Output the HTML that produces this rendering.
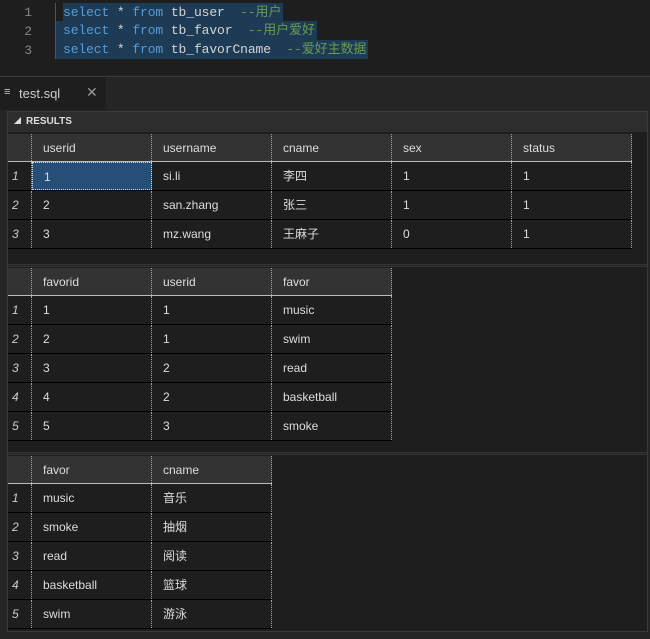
<!DOCTYPE html>
<html><head><meta charset="utf-8"><style>
*{margin:0;padding:0;box-sizing:border-box}
body{width:650px;height:639px;background:#252526;position:relative;overflow:hidden;font-family:"Liberation Sans","Noto Sans CJK SC",sans-serif;color:#ddd}
.ed{position:absolute;left:0;top:0;width:650px;height:75px;background:#1e1e1e}
.ln{position:absolute;left:18px;width:14px;text-align:right;font:13px "Liberation Mono",monospace;color:#858585}
.code{position:absolute;left:63px;font:13px "Liberation Mono","Noto Sans CJK SC",monospace;color:#d4d4d4;white-space:pre;background:#1d3b54;padding-right:2px;letter-spacing:-0.1px}
.k{color:#569cd6}.c{color:#6a9955}
.tabbar{position:absolute;left:0;top:76px;width:650px;height:33px;background:#252526;border-top:1px solid #3a3a3a}
.tab{position:absolute;left:0;top:0;width:106px;height:33px;background:#1e1e1e;font-size:13px;color:#ccc}
.res{position:absolute;left:7px;top:111px;width:641px;height:521px;background:#1e1e1e;border:1px solid #3a3a3a}
.rh{position:absolute;left:0;top:0;width:100%;height:20px;background:#2d2d2d;font-size:10px;font-weight:bold;color:#ddd;line-height:20px;padding-left:18px}
.t{position:absolute;left:0;font-size:12px;color:#ddd}
.row{position:relative;height:29px;border-bottom:1px solid #000;display:flex}
.hdr{height:28px;background:#333;border-bottom:1px solid #bbb}
.cell{width:120px;border-right:1px dotted #aaa;line-height:28px;padding-left:11px;white-space:nowrap}
.num{width:24px;border-right:1px dotted #aaa;line-height:28px;padding-left:4px;font-style:italic;color:#ccc}
.sep{position:absolute;left:0;width:100%;height:3px;border-top:1px solid #333;border-bottom:1px solid #333;background:#252526}
</style></head><body>
<div class="ed">
<div class="ln" style="top:5px">1</div><div class="ln" style="top:24px">2</div><div class="ln" style="top:43px">3</div>
<div style="position:absolute;left:55px;top:3px;width:1px;height:56px;background:#555"></div>
<div class="code" style="top:3px;height:18px;line-height:19px"><span class="k">select</span> * <span class="k">from</span> tb_user  <span class="c">--用户</span></div>
<div class="code" style="top:21px;left:56px;padding-left:7px;height:19px;line-height:20px"><span class="k">select</span> * <span class="k">from</span> tb_favor  <span class="c">--用户爱好</span></div>
<div class="code" style="top:40px;left:56px;padding-left:7px;height:19px;line-height:20px"><span class="k">select</span> * <span class="k">from</span> tb_favorCname  <span class="c">--爱好主数据</span></div>
</div>
<div class="tabbar"><div class="tab"><span style="position:absolute;left:4px;top:9px;font-size:11px;color:#ccc">≡</span><span style="position:absolute;left:19px;top:9px">test.sql</span><span style="position:absolute;left:86px;top:7px;color:#999;font-size:14px">✕</span></div></div>
<div class="res">
<div class="rh"><span style="position:absolute;left:6px;font-size:7px">◢</span>RESULTS</div>
<div class="t" style="top:22px;width:624px">
<div class="row hdr"><div class="num"></div><div class="cell">userid</div><div class="cell">username</div><div class="cell">cname</div><div class="cell">sex</div><div class="cell">status</div></div>
<div class="row"><div class="num">1</div><div class="cell" style="background:#264f78;border:1px dotted #ddd">1</div><div class="cell">si.li</div><div class="cell">李四</div><div class="cell">1</div><div class="cell">1</div></div>
<div class="row"><div class="num">2</div><div class="cell">2</div><div class="cell">san.zhang</div><div class="cell">张三</div><div class="cell">1</div><div class="cell">1</div></div>
<div class="row"><div class="num">3</div><div class="cell">3</div><div class="cell">mz.wang</div><div class="cell">王麻子</div><div class="cell">0</div><div class="cell">1</div></div>
</div>
<div class="sep" style="top:152px"></div>
<div class="t" style="top:156px;width:384px">
<div class="row hdr"><div class="num"></div><div class="cell">favorid</div><div class="cell">userid</div><div class="cell">favor</div></div>
<div class="row"><div class="num">1</div><div class="cell">1</div><div class="cell">1</div><div class="cell">music</div></div>
<div class="row"><div class="num">2</div><div class="cell">2</div><div class="cell">1</div><div class="cell">swim</div></div>
<div class="row"><div class="num">3</div><div class="cell">3</div><div class="cell">2</div><div class="cell">read</div></div>
<div class="row"><div class="num">4</div><div class="cell">4</div><div class="cell">2</div><div class="cell">basketball</div></div>
<div class="row"><div class="num">5</div><div class="cell">5</div><div class="cell">3</div><div class="cell">smoke</div></div>
</div>
<div class="sep" style="top:340px"></div>
<div class="t" style="top:344px;width:264px">
<div class="row hdr"><div class="num"></div><div class="cell">favor</div><div class="cell">cname</div></div>
<div class="row"><div class="num">1</div><div class="cell">music</div><div class="cell">音乐</div></div>
<div class="row"><div class="num">2</div><div class="cell">smoke</div><div class="cell">抽烟</div></div>
<div class="row"><div class="num">3</div><div class="cell">read</div><div class="cell">阅读</div></div>
<div class="row"><div class="num">4</div><div class="cell">basketball</div><div class="cell">篮球</div></div>
<div class="row"><div class="num">5</div><div class="cell">swim</div><div class="cell">游泳</div></div>
</div>
</div>
</body></html>
